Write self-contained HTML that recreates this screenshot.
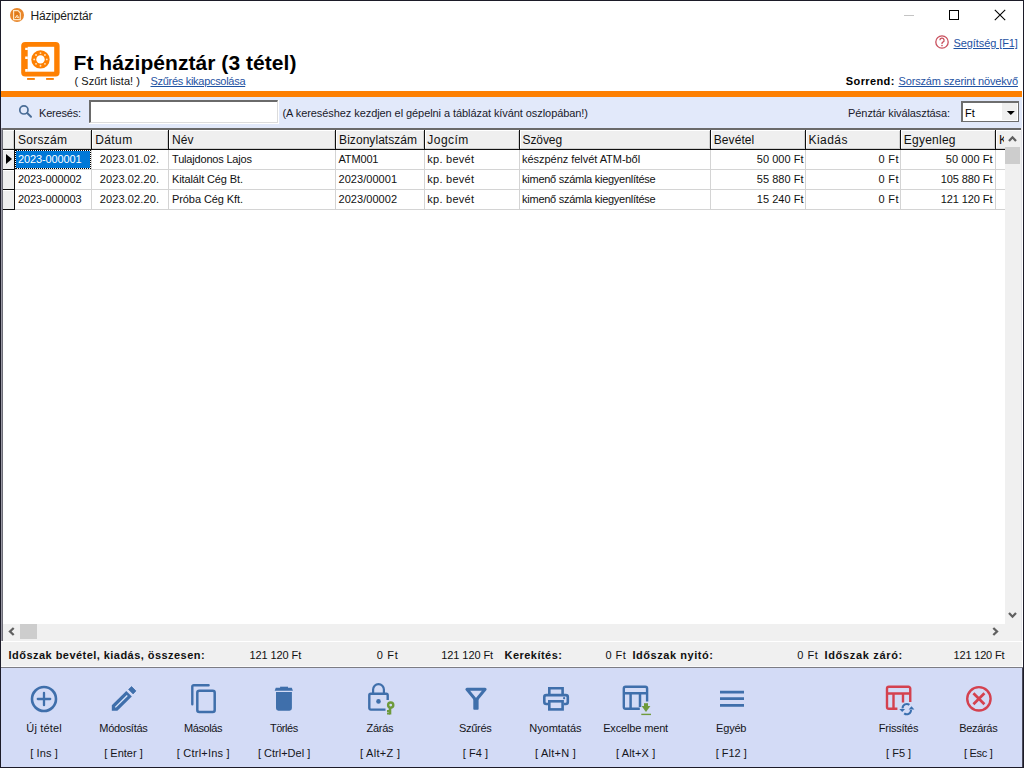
<!DOCTYPE html>
<html><head><meta charset="utf-8"><title>Házipénztár</title>
<style>
html,body{margin:0;padding:0;}
body{width:1024px;height:768px;overflow:hidden;position:relative;background:#fff;font-family:"Liberation Sans", sans-serif;}
.t{position:absolute;white-space:pre;}
svg{position:absolute;}
</style></head><body>
<svg style="left:9px;top:7px" width="16" height="16" viewBox="0 0 16 16">
<circle cx="8" cy="8" r="7" fill="#e8862a"/>
<path d="M4.6 3.7h4.4l2.3 2.3v6.6H4.6z" fill="#e07a1a" stroke="#ffe6c4" stroke-width="1.2"/>
<path d="M6 11.2l2.1-3 2.1 3M7 9.6l2.4 1.2" fill="none" stroke="#ffe6c4" stroke-width="1"/>
</svg>
<div style="position:absolute;left:904px;top:15px;width:10px;height:1px;background:#c4c4c4;"></div>
<div style="position:absolute;left:949px;top:10px;width:10px;height:10px;background:transparent;box-sizing:border-box;border:1px solid #000;"></div>
<svg style="left:994px;top:9px" width="12" height="12" viewBox="0 0 12 12">
<path d="M0.8 0.8L11.2 11.2M11.2 0.8L0.8 11.2" stroke="#000" stroke-width="1.1"/></svg>
<svg style="left:20px;top:41px" width="42" height="41" viewBox="0 0 42 41">
<rect x="1.2" y="1.1" width="38.4" height="34.3" rx="4" fill="#fe8002"/>
<rect x="7.7" y="5.8" width="26.5" height="24.9" fill="#fff"/>
<path d="M5.2 6.7h2.6v2.4H5.2z M5.2 15.4h2.6v2.7H5.2z M5.2 28h2.6v2.7H5.2z" fill="#fff"/>
<circle cx="20.5" cy="18.4" r="9.2" fill="#fe8002"/>
<circle cx="20.5" cy="18.4" r="4.2" fill="#fff"/>
<g fill="#ffe3bd"><circle cx="26.80" cy="18.40" r="0.95"/><circle cx="24.95" cy="22.85" r="0.95"/><circle cx="20.50" cy="24.70" r="0.95"/><circle cx="16.05" cy="22.85" r="0.95"/><circle cx="14.20" cy="18.40" r="0.95"/><circle cx="16.05" cy="13.95" r="0.95"/><circle cx="20.50" cy="12.10" r="0.95"/><circle cx="24.95" cy="13.95" r="0.95"/></g>
<rect x="7.1" y="37" width="7.7" height="1.9" fill="#fe8002"/>
<rect x="26.1" y="37" width="7.7" height="1.9" fill="#fe8002"/>
</svg>
<svg style="left:934px;top:34px" width="16" height="16" viewBox="0 0 16 16">
<circle cx="8" cy="8" r="6.2" fill="none" stroke="#c9505e" stroke-width="1.3"/>
<path d="M5.9 6.3a2.1 2.1 0 1 1 3 1.9c-.6.3-.9.7-.9 1.3v.5" fill="none" stroke="#c9505e" stroke-width="1.3"/>
<circle cx="8" cy="11.6" r="0.8" fill="#c9505e"/></svg>
<div style="position:absolute;left:1px;top:91px;width:1022px;height:6px;background:#fe8002;"></div>
<div style="position:absolute;left:1px;top:97px;width:1022px;height:31px;background:#e2e9fa;"></div>
<svg style="left:18px;top:104px" width="16" height="16" viewBox="0 0 16 16">
<circle cx="5.9" cy="5.9" r="4.1" fill="none" stroke="#4a6d96" stroke-width="1.7"/>
<path d="M9.2 9.1L13 12.7" stroke="#4a6d96" stroke-width="2" stroke-linecap="round"/></svg>
<div style="position:absolute;left:89px;top:100px;width:190px;height:24px;background:#fff;"></div>
<div style="position:absolute;left:89px;top:100px;width:189px;height:23px;background:#fff;box-sizing:border-box;border-top:2px solid #6a6a6a;border-left:2px solid #6a6a6a;border-right:1px solid #dcdcdc;border-bottom:1px solid #dcdcdc;"></div>
<div style="position:absolute;left:961px;top:101px;width:58px;height:21px;background:#fff;box-sizing:border-box;border-top:2px solid #6e6e6e;border-left:2px solid #6e6e6e;border-right:1px solid #6e6e6e;border-bottom:1px solid #6e6e6e;"></div>
<div style="position:absolute;left:1002px;top:103px;width:15px;height:17px;background:#efefef;"></div>
<svg style="left:1006px;top:109px" width="10" height="8" viewBox="0 0 10 8"><path d="M0.8 2h8L4.8 6z" fill="#000"/></svg>
<div style="position:absolute;left:2px;top:128px;width:1020px;height:2px;background:#6a6a6a;"></div>
<div style="position:absolute;left:2px;top:130px;width:1019px;height:1px;background:#ffffff;"></div>
<div style="position:absolute;left:2px;top:131px;width:1003px;height:493px;background:#ffffff;"></div>
<div style="position:absolute;left:1px;top:128px;width:1px;height:513px;background:#9a99a5;"></div>
<div style="position:absolute;left:2px;top:128px;width:1px;height:513px;background:#6e6e78;"></div>
<div style="position:absolute;left:3px;top:131px;width:1002px;height:17px;background:#efefef;"></div>
<div style="position:absolute;left:3px;top:148px;width:1002px;height:1px;background:#d0d0d0;"></div>
<div style="position:absolute;left:3px;top:149px;width:1002px;height:1px;background:#101010;"></div>
<div style="position:absolute;left:90px;top:131px;width:1px;height:17px;background:#d0d0d0;"></div>
<div style="position:absolute;left:91px;top:130px;width:1px;height:20px;background:#101010;"></div>
<div style="position:absolute;left:92px;top:131px;width:1px;height:17px;background:#ffffff;"></div>
<div style="position:absolute;left:167px;top:131px;width:1px;height:17px;background:#d0d0d0;"></div>
<div style="position:absolute;left:168px;top:130px;width:1px;height:20px;background:#101010;"></div>
<div style="position:absolute;left:169px;top:131px;width:1px;height:17px;background:#ffffff;"></div>
<div style="position:absolute;left:334px;top:131px;width:1px;height:17px;background:#d0d0d0;"></div>
<div style="position:absolute;left:335px;top:130px;width:1px;height:20px;background:#101010;"></div>
<div style="position:absolute;left:336px;top:131px;width:1px;height:17px;background:#ffffff;"></div>
<div style="position:absolute;left:423px;top:131px;width:1px;height:17px;background:#d0d0d0;"></div>
<div style="position:absolute;left:424px;top:130px;width:1px;height:20px;background:#101010;"></div>
<div style="position:absolute;left:425px;top:131px;width:1px;height:17px;background:#ffffff;"></div>
<div style="position:absolute;left:518px;top:131px;width:1px;height:17px;background:#d0d0d0;"></div>
<div style="position:absolute;left:519px;top:130px;width:1px;height:20px;background:#101010;"></div>
<div style="position:absolute;left:520px;top:131px;width:1px;height:17px;background:#ffffff;"></div>
<div style="position:absolute;left:709px;top:131px;width:1px;height:17px;background:#d0d0d0;"></div>
<div style="position:absolute;left:710px;top:130px;width:1px;height:20px;background:#101010;"></div>
<div style="position:absolute;left:711px;top:131px;width:1px;height:17px;background:#ffffff;"></div>
<div style="position:absolute;left:804px;top:131px;width:1px;height:17px;background:#d0d0d0;"></div>
<div style="position:absolute;left:805px;top:130px;width:1px;height:20px;background:#101010;"></div>
<div style="position:absolute;left:806px;top:131px;width:1px;height:17px;background:#ffffff;"></div>
<div style="position:absolute;left:899px;top:131px;width:1px;height:17px;background:#d0d0d0;"></div>
<div style="position:absolute;left:900px;top:130px;width:1px;height:20px;background:#101010;"></div>
<div style="position:absolute;left:901px;top:131px;width:1px;height:17px;background:#ffffff;"></div>
<div style="position:absolute;left:994px;top:131px;width:1px;height:17px;background:#d0d0d0;"></div>
<div style="position:absolute;left:995px;top:130px;width:1px;height:20px;background:#101010;"></div>
<div style="position:absolute;left:996px;top:131px;width:1px;height:17px;background:#ffffff;"></div>
<div style="position:absolute;left:14px;top:130px;width:1px;height:20px;background:#101010;"></div>
<div style="position:absolute;left:13px;top:131px;width:1px;height:17px;background:#d0d0d0;"></div>
<div style="position:absolute;left:3px;top:150px;width:11px;height:19px;background:#efefef;"></div>
<div style="position:absolute;left:3px;top:150px;width:11px;height:1px;background:#ffffff;"></div>
<div style="position:absolute;left:14px;top:150px;width:1px;height:20px;background:#101010;"></div>
<div style="position:absolute;left:3px;top:169px;width:12px;height:1px;background:#101010;"></div>
<div style="position:absolute;left:15px;top:169px;width:990px;height:1px;background:#d4d4d4;"></div>
<div style="position:absolute;left:91px;top:150px;width:1px;height:20px;background:#d4d4d4;"></div>
<div style="position:absolute;left:168px;top:150px;width:1px;height:20px;background:#d4d4d4;"></div>
<div style="position:absolute;left:335px;top:150px;width:1px;height:20px;background:#d4d4d4;"></div>
<div style="position:absolute;left:424px;top:150px;width:1px;height:20px;background:#d4d4d4;"></div>
<div style="position:absolute;left:519px;top:150px;width:1px;height:20px;background:#d4d4d4;"></div>
<div style="position:absolute;left:710px;top:150px;width:1px;height:20px;background:#d4d4d4;"></div>
<div style="position:absolute;left:805px;top:150px;width:1px;height:20px;background:#d4d4d4;"></div>
<div style="position:absolute;left:900px;top:150px;width:1px;height:20px;background:#d4d4d4;"></div>
<div style="position:absolute;left:995px;top:150px;width:1px;height:20px;background:#d4d4d4;"></div>
<div style="position:absolute;left:3px;top:170px;width:11px;height:19px;background:#efefef;"></div>
<div style="position:absolute;left:3px;top:170px;width:11px;height:1px;background:#ffffff;"></div>
<div style="position:absolute;left:14px;top:170px;width:1px;height:20px;background:#101010;"></div>
<div style="position:absolute;left:3px;top:189px;width:12px;height:1px;background:#101010;"></div>
<div style="position:absolute;left:15px;top:189px;width:990px;height:1px;background:#d4d4d4;"></div>
<div style="position:absolute;left:91px;top:170px;width:1px;height:20px;background:#d4d4d4;"></div>
<div style="position:absolute;left:168px;top:170px;width:1px;height:20px;background:#d4d4d4;"></div>
<div style="position:absolute;left:335px;top:170px;width:1px;height:20px;background:#d4d4d4;"></div>
<div style="position:absolute;left:424px;top:170px;width:1px;height:20px;background:#d4d4d4;"></div>
<div style="position:absolute;left:519px;top:170px;width:1px;height:20px;background:#d4d4d4;"></div>
<div style="position:absolute;left:710px;top:170px;width:1px;height:20px;background:#d4d4d4;"></div>
<div style="position:absolute;left:805px;top:170px;width:1px;height:20px;background:#d4d4d4;"></div>
<div style="position:absolute;left:900px;top:170px;width:1px;height:20px;background:#d4d4d4;"></div>
<div style="position:absolute;left:995px;top:170px;width:1px;height:20px;background:#d4d4d4;"></div>
<div style="position:absolute;left:3px;top:190px;width:11px;height:19px;background:#efefef;"></div>
<div style="position:absolute;left:3px;top:190px;width:11px;height:1px;background:#ffffff;"></div>
<div style="position:absolute;left:14px;top:190px;width:1px;height:20px;background:#101010;"></div>
<div style="position:absolute;left:3px;top:209px;width:12px;height:1px;background:#101010;"></div>
<div style="position:absolute;left:15px;top:209px;width:990px;height:1px;background:#d4d4d4;"></div>
<div style="position:absolute;left:91px;top:190px;width:1px;height:20px;background:#d4d4d4;"></div>
<div style="position:absolute;left:168px;top:190px;width:1px;height:20px;background:#d4d4d4;"></div>
<div style="position:absolute;left:335px;top:190px;width:1px;height:20px;background:#d4d4d4;"></div>
<div style="position:absolute;left:424px;top:190px;width:1px;height:20px;background:#d4d4d4;"></div>
<div style="position:absolute;left:519px;top:190px;width:1px;height:20px;background:#d4d4d4;"></div>
<div style="position:absolute;left:710px;top:190px;width:1px;height:20px;background:#d4d4d4;"></div>
<div style="position:absolute;left:805px;top:190px;width:1px;height:20px;background:#d4d4d4;"></div>
<div style="position:absolute;left:900px;top:190px;width:1px;height:20px;background:#d4d4d4;"></div>
<div style="position:absolute;left:995px;top:190px;width:1px;height:20px;background:#d4d4d4;"></div>
<div style="position:absolute;left:15px;top:150px;width:76px;height:19px;background:#ffffff;"></div>
<div style="position:absolute;left:15px;top:150px;width:76px;height:19px;background:#0078d7;box-sizing:border-box;border:1px dotted #000;background-clip:padding-box;"></div>
<svg style="left:5px;top:153px" width="8" height="12" viewBox="0 0 8 12"><path d="M1 1v10l6-5z" fill="#000"/></svg>
<div style="position:absolute;left:997px;top:131px;width:7px;height:17px;overflow:hidden"><div class="t" style="left:2px;top:2px;font-size:12px;line-height:14px;color:#111">Kiadás</div></div>
<div style="position:absolute;left:1005px;top:131px;width:16px;height:493px;background:#f0f0f0;"></div>
<svg style="left:1007px;top:134px" width="11" height="9" viewBox="0 0 11 9"><path d="M2 7L5.5 3.3 9 7" fill="none" stroke="#606060" stroke-width="2.3"/></svg>
<div style="position:absolute;left:1005px;top:147px;width:15px;height:17px;background:#cdcdcd;"></div>
<svg style="left:1007px;top:611px" width="11" height="9" viewBox="0 0 11 9"><path d="M2 2L5.5 5.7 9 2" fill="none" stroke="#606060" stroke-width="2.3"/></svg>
<div style="position:absolute;left:3px;top:624px;width:1018px;height:17px;background:#f0f0f0;"></div>
<svg style="left:7px;top:626px" width="9" height="11" viewBox="0 0 9 11"><path d="M6.7 2L3 5.5 6.7 9" fill="none" stroke="#606060" stroke-width="2.3"/></svg>
<div style="position:absolute;left:20px;top:624px;width:17px;height:15px;background:#cdcdcd;"></div>
<svg style="left:991px;top:626px" width="9" height="11" viewBox="0 0 9 11"><path d="M2.3 2L6 5.5 2.3 9" fill="none" stroke="#606060" stroke-width="2.3"/></svg>
<div style="position:absolute;left:1021px;top:128px;width:1px;height:513px;background:#e4e4ea;"></div>
<div style="position:absolute;left:1022px;top:1px;width:1px;height:667px;background:#ffffff;"></div>
<div style="position:absolute;left:1px;top:641px;width:1022px;height:1px;background:#ffffff;"></div>
<div style="position:absolute;left:1px;top:642px;width:1021px;height:25px;background:#f0f0f0;"></div>
<div style="position:absolute;left:1px;top:666px;width:1021px;height:1px;background:#fafafa;"></div>
<div style="position:absolute;left:1px;top:667px;width:1022px;height:1px;background:#7c7c84;"></div>
<div style="position:absolute;left:1px;top:668px;width:1022px;height:99px;background:#d3dbf6;"></div>
<svg style="left:29px;top:684px" width="30" height="30" viewBox="0 0 30 30">
<circle cx="15" cy="15" r="12" fill="none" stroke="#3f6fab" stroke-width="2.6"/>
<path d="M15 8.8v12.4M8.8 15h12.4" stroke="#3f6fab" stroke-width="2.3" stroke-linecap="round"/></svg>
<svg style="left:104px;top:680px" width="40" height="40" viewBox="0 0 40 40">
<path d="M7.8 25.3L22.3 10.9 27.8 16.4 13.4 30.8H7.8z" fill="#3f6fab"/>
<path d="M11.3 27.4L23.3 15.5" stroke="#dbe6fb" stroke-width="1.3"/>
<path d="M24.6 9.4L27.6 6.6 31.9 10.9 29.1 13.9z" fill="#3f6fab" stroke="#3f6fab" stroke-width="0.8" stroke-linejoin="round"/></svg>
<svg style="left:190px;top:683px" width="28" height="32" viewBox="0 0 28 32">
<path d="M2.3 21.3V3.6a1.4 1.4 0 0 1 1.4-1.4H18.6" fill="none" stroke="#3f6fab" stroke-width="2.4" stroke-linecap="round"/>
<rect x="7.3" y="7.8" width="17.4" height="21.3" rx="2" fill="none" stroke="#3f6fab" stroke-width="2.5"/></svg>
<svg style="left:264px;top:680px" width="40" height="40" viewBox="0 0 40 40">
<path d="M16.1 6.7h7.9V8.2h-7.9z" fill="#3f6fab"/>
<path d="M11.8 7.7H27.8L28.9 10.7H10.7z" fill="#3f6fab"/>
<path d="M12 12H27.9V28.3a2.4 2.4 0 0 1-2.4 2.4H14.4a2.4 2.4 0 0 1-2.4-2.4z" fill="#3f6fab"/></svg>
<svg style="left:360px;top:678px" width="40" height="40" viewBox="0 0 40 40">
<path d="M13.1 15.2V11.5A5.4 5.4 0 0 1 23.9 11.5V15.2" fill="none" stroke="#3f6fab" stroke-width="2.2"/>
<path d="M27.7 22V17.3a1.5 1.5 0 0 0-1.5-1.5H10.8a1.5 1.5 0 0 0-1.5 1.5V30.1a1.5 1.5 0 0 0 1.5 1.5H25.5" fill="none" stroke="#3f6fab" stroke-width="2.4"/>
<circle cx="18.5" cy="23.4" r="2.3" fill="#3f6fab"/>
<circle cx="30.7" cy="27.1" r="2.6" fill="none" stroke="#6e9a3c" stroke-width="2.4"/>
<path d="M30 29.5V36.5" stroke="#6e9a3c" stroke-width="2.6"/>
<path d="M27 33h3M27 35.6h3" stroke="#6e9a3c" stroke-width="2"/></svg>
<svg style="left:456px;top:680px" width="40" height="40" viewBox="0 0 40 40">
<path d="M10.9 9.3H29.1L20 20.2z" fill="none" stroke="#3f6fab" stroke-width="3" stroke-linejoin="round"/>
<rect x="17.3" y="18" width="5.3" height="11.7" rx="0.8" fill="#3f6fab"/></svg>
<svg style="left:536px;top:680px" width="40" height="40" viewBox="0 0 40 40">
<path d="M13.3 14.5V8.3H26.6V14.5" fill="none" stroke="#3f6fab" stroke-width="2.6"/>
<path d="M12 24H10.3a2 2 0 0 1-2-2V17.1a2 2 0 0 1 2-2H29.8a2 2 0 0 1 2 2V22a2 2 0 0 1-2 2H28" fill="none" stroke="#3f6fab" stroke-width="2.6"/>
<rect x="13.3" y="21.3" width="13.3" height="8.1" fill="none" stroke="#3f6fab" stroke-width="2.6"/>
<circle cx="28.1" cy="18.2" r="1.1" fill="#3f6fab"/></svg>
<svg style="left:615px;top:680px" width="40" height="40" viewBox="0 0 40 40">
<path d="M32.1 21.4V8.5a1.8 1.8 0 0 0-1.8-1.8H10.6a1.8 1.8 0 0 0-1.8 1.8V26.9a1.8 1.8 0 0 0 1.8 1.8H24.8" fill="none" stroke="#3f6fab" stroke-width="2.4"/>
<path d="M8.8 13.3H32.1M15.6 13.3V28.7M25 13.3V27" stroke="#3f6fab" stroke-width="2.5"/>
<path d="M29 23.2h4v3.2H29z" fill="#6e9a3c"/>
<path d="M26.6 26h8.8l-4.4 6z" fill="#6e9a3c"/>
<path d="M26.3 34.4H36" stroke="#6e9a3c" stroke-width="1.4"/></svg>
<svg style="left:719px;top:689px" width="26" height="20" viewBox="0 0 26 20">
<path d="M1 3.2h24M1 9.7h24M1 16.4h24" stroke="#3f6fab" stroke-width="2.8"/></svg>
<svg style="left:880px;top:680px" width="40" height="40" viewBox="0 0 40 40">
<path d="M30.25 21.9V8.5a1.8 1.8 0 0 0-1.8-1.8H8.8a1.8 1.8 0 0 0-1.8 1.8V26.9a1.8 1.8 0 0 0 1.8 1.8H17.4" fill="none" stroke="#d4414f" stroke-width="2.4"/>
<path d="M7 13.5H30.25M13.5 13.5V28.7M23 13.5V22.4" stroke="#d4414f" stroke-width="2.4"/>
<path d="M29.4 24.9A4.2 4.2 0 0 0 22.6 28.4" fill="none" stroke="#3a6fae" stroke-width="2"/>
<path d="M19.3 28.9h5.8l-2.9 3.2z" fill="#3a6fae"/>
<path d="M24.2 33.4A4.2 4.2 0 0 0 31 30" fill="none" stroke="#3a6fae" stroke-width="2"/>
<path d="M28.6 29.6h5.8l-2.9-3.4z" fill="#3a6fae"/></svg>
<svg style="left:964px;top:684px" width="30" height="30" viewBox="0 0 30 30">
<circle cx="14.9" cy="14.8" r="11.7" fill="none" stroke="#d4414f" stroke-width="2.4"/>
<path d="M9.4 9.3l11 11M20.4 9.3l-11 11" stroke="#d4414f" stroke-width="2.7"/></svg>
<div style="position:absolute;left:0px;top:0px;width:1024px;height:1px;background:#1c1b28;"></div>
<div style="position:absolute;left:0px;top:767px;width:1024px;height:1px;background:#1c1b28;"></div>
<div style="position:absolute;left:0px;top:0px;width:1px;height:768px;background:#1c1b28;"></div>
<div style="position:absolute;left:1023px;top:0px;width:1px;height:768px;background:#1c1b28;"></div>
<div style="position:absolute;left:1022px;top:668px;width:1px;height:99px;background:#4a4a5a;"></div>
<div class="t" style="left:30.50px;top:9px;font-size:12px;line-height:14px;color:#1b1b1b;letter-spacing:-0.203px;">Házipénztár</div>
<div class="t" style="left:73.50px;top:51px;font-size:21px;line-height:23px;font-weight:700;color:#000;letter-spacing:0.056px;">Ft házipénztár (3 tétel)</div>
<div class="t" style="left:74.50px;top:75px;font-size:11px;line-height:12px;color:#111;letter-spacing:0.047px;">( Szűrt lista! )</div>
<div class="t" style="left:150.50px;top:75px;font-size:11px;line-height:12px;color:#1e52a2;letter-spacing:-0.293px;text-decoration:underline;">Szűrés kikapcsolása</div>
<div class="t" style="left:953.50px;top:37px;font-size:11px;line-height:12px;color:#1e52a2;letter-spacing:-0.086px;text-decoration:underline;">Segítség [F1]</div>
<div class="t" style="left:845.80px;top:75px;font-size:11px;line-height:12px;font-weight:700;color:#000;letter-spacing:0.394px;">Sorrend:</div>
<div class="t" style="left:898.50px;top:75px;font-size:11px;line-height:12px;color:#1e52a2;letter-spacing:-0.150px;text-decoration:underline;">Sorszám szerint növekvő</div>
<div class="t" style="left:39.00px;top:107px;font-size:11px;line-height:12px;color:#1a1a2a;letter-spacing:-0.203px;">Keresés:</div>
<div class="t" style="left:282.50px;top:107px;font-size:11px;line-height:12px;color:#1a1a2a;letter-spacing:-0.073px;">(A kereséshez kezdjen el gépelni a táblázat kívánt oszlopában!)</div>
<div class="t" style="left:848.10px;top:107px;font-size:11px;line-height:12px;color:#1a1a2a;letter-spacing:-0.097px;">Pénztár kiválasztása:</div>
<div class="t" style="left:965.00px;top:107px;font-size:11px;line-height:12px;color:#000;">Ft</div>
<div class="t" style="left:18.00px;top:133px;font-size:12px;line-height:14px;color:#111;letter-spacing:0.276px;">Sorszám</div>
<div class="t" style="left:95.20px;top:133px;font-size:12px;line-height:14px;color:#111;letter-spacing:0.414px;">Dátum</div>
<div class="t" style="left:172.10px;top:133px;font-size:12px;line-height:14px;color:#111;">Név</div>
<div class="t" style="left:339.10px;top:133px;font-size:12px;line-height:14px;color:#111;letter-spacing:0.052px;">Bizonylatszám</div>
<div class="t" style="left:427.30px;top:133px;font-size:12px;line-height:14px;color:#111;letter-spacing:0.463px;">Jogcím</div>
<div class="t" style="left:522.50px;top:133px;font-size:12px;line-height:14px;color:#111;letter-spacing:-0.086px;">Szöveg</div>
<div class="t" style="left:713.80px;top:133px;font-size:12px;line-height:14px;color:#111;letter-spacing:0.061px;">Bevétel</div>
<div class="t" style="left:808.50px;top:133px;font-size:12px;line-height:14px;color:#111;letter-spacing:0.459px;">Kiadás</div>
<div class="t" style="left:903.80px;top:133px;font-size:12px;line-height:14px;color:#111;letter-spacing:0.236px;">Egyenleg</div>
<div class="t" style="left:18.00px;top:153px;font-size:11px;line-height:12px;color:#fff;letter-spacing:-0.134px;">2023-000001</div>
<div class="t" style="left:99.70px;top:153px;font-size:11px;line-height:12px;color:#111;letter-spacing:0.127px;">2023.01.02.</div>
<div class="t" style="left:172.00px;top:153px;font-size:11px;line-height:12px;color:#111;letter-spacing:-0.184px;">Tulajdonos Lajos</div>
<div class="t" style="left:338.50px;top:153px;font-size:11px;line-height:12px;color:#111;letter-spacing:-0.153px;">ATM001</div>
<div class="t" style="left:427.30px;top:153px;font-size:11px;line-height:12px;color:#111;letter-spacing:0.257px;">kp. bevét</div>
<div class="t" style="left:522.10px;top:153px;font-size:11px;line-height:12px;color:#111;letter-spacing:-0.046px;">készpénz felvét ATM-ből</div>
<div class="t" style="left:756.80px;top:153px;font-size:11px;line-height:12px;color:#111;letter-spacing:0.027px;">50 000 Ft</div>
<div class="t" style="left:878.50px;top:153px;font-size:11px;line-height:12px;color:#111;letter-spacing:0.349px;">0 Ft</div>
<div class="t" style="left:945.80px;top:153px;font-size:11px;line-height:12px;color:#111;letter-spacing:0.027px;">50 000 Ft</div>
<div class="t" style="left:18.00px;top:173px;font-size:11px;line-height:12px;color:#111;letter-spacing:-0.134px;">2023-000002</div>
<div class="t" style="left:99.70px;top:173px;font-size:11px;line-height:12px;color:#111;letter-spacing:0.127px;">2023.02.20.</div>
<div class="t" style="left:172.00px;top:173px;font-size:11px;line-height:12px;color:#111;letter-spacing:-0.118px;">Kitalált Cég Bt.</div>
<div class="t" style="left:338.50px;top:173px;font-size:11px;line-height:12px;color:#111;letter-spacing:0.042px;">2023/00001</div>
<div class="t" style="left:427.30px;top:173px;font-size:11px;line-height:12px;color:#111;letter-spacing:0.257px;">kp. bevét</div>
<div class="t" style="left:522.10px;top:173px;font-size:11px;line-height:12px;color:#111;letter-spacing:-0.270px;">kimenő számla kiegyenlítése</div>
<div class="t" style="left:756.80px;top:173px;font-size:11px;line-height:12px;color:#111;letter-spacing:0.027px;">55 880 Ft</div>
<div class="t" style="left:878.50px;top:173px;font-size:11px;line-height:12px;color:#111;letter-spacing:0.349px;">0 Ft</div>
<div class="t" style="left:940.70px;top:173px;font-size:11px;line-height:12px;color:#111;letter-spacing:-0.088px;">105 880 Ft</div>
<div class="t" style="left:18.00px;top:193px;font-size:11px;line-height:12px;color:#111;letter-spacing:-0.134px;">2023-000003</div>
<div class="t" style="left:99.70px;top:193px;font-size:11px;line-height:12px;color:#111;letter-spacing:0.127px;">2023.02.20.</div>
<div class="t" style="left:172.00px;top:193px;font-size:11px;line-height:12px;color:#111;letter-spacing:-0.089px;">Próba Cég Kft.</div>
<div class="t" style="left:338.50px;top:193px;font-size:11px;line-height:12px;color:#111;letter-spacing:0.042px;">2023/00002</div>
<div class="t" style="left:427.30px;top:193px;font-size:11px;line-height:12px;color:#111;letter-spacing:0.257px;">kp. bevét</div>
<div class="t" style="left:522.10px;top:193px;font-size:11px;line-height:12px;color:#111;letter-spacing:-0.270px;">kimenő számla kiegyenlítése</div>
<div class="t" style="left:756.80px;top:193px;font-size:11px;line-height:12px;color:#111;letter-spacing:0.027px;">15 240 Ft</div>
<div class="t" style="left:878.50px;top:193px;font-size:11px;line-height:12px;color:#111;letter-spacing:0.349px;">0 Ft</div>
<div class="t" style="left:940.70px;top:193px;font-size:11px;line-height:12px;color:#111;letter-spacing:-0.088px;">121 120 Ft</div>
<div class="t" style="left:8.60px;top:649px;font-size:11px;line-height:12px;font-weight:700;color:#111;letter-spacing:0.455px;">Időszak bevétel, kiadás, összesen:</div>
<div class="t" style="left:249.40px;top:649px;font-size:11px;line-height:12px;color:#111;letter-spacing:-0.088px;">121 120 Ft</div>
<div class="t" style="left:376.80px;top:649px;font-size:11px;line-height:12px;color:#111;letter-spacing:0.649px;">0 Ft</div>
<div class="t" style="left:441.30px;top:649px;font-size:11px;line-height:12px;color:#111;letter-spacing:-0.088px;">121 120 Ft</div>
<div class="t" style="left:504.60px;top:649px;font-size:11px;line-height:12px;font-weight:700;color:#111;letter-spacing:0.455px;">Kerekítés:</div>
<div class="t" style="left:605.40px;top:649px;font-size:11px;line-height:12px;color:#111;letter-spacing:0.516px;">0 Ft</div>
<div class="t" style="left:632.50px;top:649px;font-size:11px;line-height:12px;font-weight:700;color:#111;letter-spacing:0.543px;">Időszak nyitó:</div>
<div class="t" style="left:797.30px;top:649px;font-size:11px;line-height:12px;color:#111;letter-spacing:0.516px;">0 Ft</div>
<div class="t" style="left:824.50px;top:649px;font-size:11px;line-height:12px;font-weight:700;color:#111;letter-spacing:0.668px;">Időszak záró:</div>
<div class="t" style="left:953.50px;top:649px;font-size:11px;line-height:12px;color:#111;letter-spacing:-0.177px;">121 120 Ft</div>
<div class="t" style="left:26.30px;top:722px;font-size:11px;line-height:12px;color:#151520;letter-spacing:0.164px;">Új tétel</div>
<div class="t" style="left:30.25px;top:747px;font-size:11px;line-height:12px;color:#151520;letter-spacing:0.099px;">[ Ins ]</div>
<div class="t" style="left:99.25px;top:722px;font-size:11px;line-height:12px;color:#151520;letter-spacing:-0.281px;">Módosítás</div>
<div class="t" style="left:104.20px;top:747px;font-size:11px;line-height:12px;color:#151520;letter-spacing:0.009px;">[ Enter ]</div>
<div class="t" style="left:183.90px;top:722px;font-size:11px;line-height:12px;color:#151520;letter-spacing:-0.395px;">Másolás</div>
<div class="t" style="left:176.70px;top:747px;font-size:11px;line-height:12px;color:#151520;letter-spacing:0.233px;">[ Ctrl+Ins ]</div>
<div class="t" style="left:269.95px;top:722px;font-size:11px;line-height:12px;color:#151520;letter-spacing:-0.452px;">Törlés</div>
<div class="t" style="left:257.95px;top:747px;font-size:11px;line-height:12px;color:#151520;">[ Ctrl+Del ]</div>
<div class="t" style="left:366.40px;top:722px;font-size:11px;line-height:12px;color:#151520;letter-spacing:-0.231px;">Zárás</div>
<div class="t" style="left:360.00px;top:747px;font-size:11px;line-height:12px;color:#151520;letter-spacing:0.299px;">[ Alt+Z ]</div>
<div class="t" style="left:459.02px;top:722px;font-size:11px;line-height:12px;color:#151520;letter-spacing:-0.300px;">Szűrés</div>
<div class="t" style="left:462.75px;top:747px;font-size:11px;line-height:12px;color:#151520;letter-spacing:0.048px;">[ F4 ]</div>
<div class="t" style="left:529.25px;top:722px;font-size:11px;line-height:12px;color:#151520;letter-spacing:-0.035px;">Nyomtatás</div>
<div class="t" style="left:534.90px;top:747px;font-size:11px;line-height:12px;color:#151520;letter-spacing:0.271px;">[ Alt+N ]</div>
<div class="t" style="left:603.20px;top:722px;font-size:11px;line-height:12px;color:#151520;letter-spacing:-0.151px;">Excelbe ment</div>
<div class="t" style="left:616.05px;top:747px;font-size:11px;line-height:12px;color:#151520;letter-spacing:0.135px;">[ Alt+X ]</div>
<div class="t" style="left:716.10px;top:722px;font-size:11px;line-height:12px;color:#151520;letter-spacing:-0.201px;">Egyéb</div>
<div class="t" style="left:715.80px;top:747px;font-size:11px;line-height:12px;color:#151520;letter-spacing:-0.031px;">[ F12 ]</div>
<div class="t" style="left:878.80px;top:722px;font-size:11px;line-height:12px;color:#151520;letter-spacing:-0.245px;">Frissítés</div>
<div class="t" style="left:886.10px;top:747px;font-size:11px;line-height:12px;color:#151520;letter-spacing:-0.013px;">[ F5 ]</div>
<div class="t" style="left:959.15px;top:722px;font-size:11px;line-height:12px;color:#151520;letter-spacing:-0.310px;">Bezárás</div>
<div class="t" style="left:963.90px;top:747px;font-size:11px;line-height:12px;color:#151520;letter-spacing:-0.260px;">[ Esc ]</div>
</body></html>
